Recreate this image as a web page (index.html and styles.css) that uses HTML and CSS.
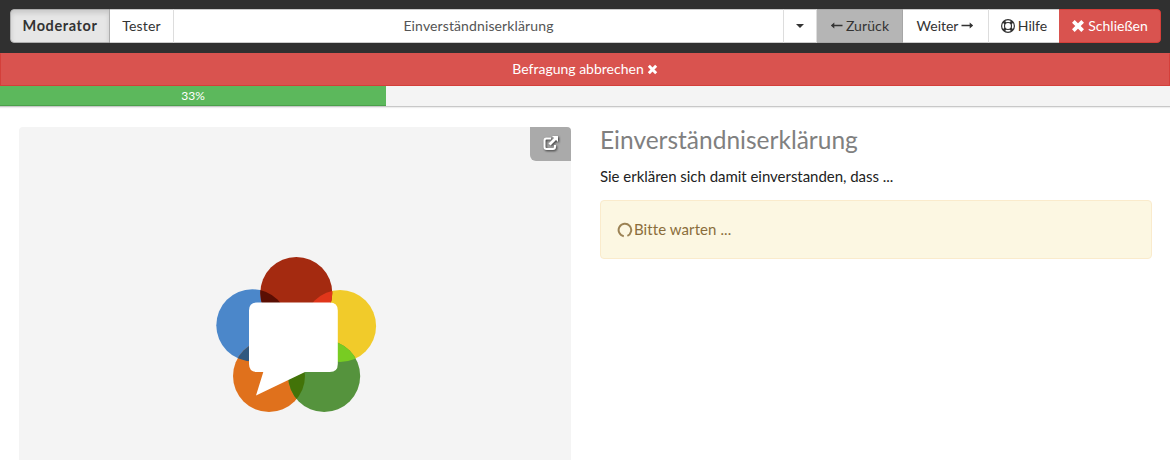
FILE: index.html
```html
<!DOCTYPE html>
<html lang="de">
<head>
<meta charset="utf-8">
<title>Einverständniserklärung</title>
<link rel="stylesheet" href="styles.css">
</head>
<body>
<header class="topbar">
  <div class="btn-group">
    <button class="btn btn-mod active">Moderator</button>
    <button class="btn btn-tester">Tester</button>
    <button class="btn btn-page">Einverständniserklärung</button>
    <button class="btn btn-caret" aria-label="Seiten"><span class="caret"></span></button>
    <button class="btn btn-back">
      <svg class="arrow" width="13" height="10" viewBox="0 0 13 10"><path d="M12.500 4.500H2"/><path class="tip" d="M.8 4.500 4.300 1.500v6z"/></svg>
      <span>Zurück</span>
    </button>
    <button class="btn btn-next">
      <span>Weiter</span>
      <svg class="arrow" width="13" height="10" viewBox="0 0 13 10"><path d="M.5 4.500H11"/><path class="tip" d="M12.200 4.500 8.700 1.500v6z"/></svg>
    </button>
    <button class="btn btn-help">
      <svg class="ring" width="14" height="14" viewBox="0 0 14 14"><circle cx="7" cy="7" r="6.400"/><circle cx="7" cy="7" r="3.500"/><path class="spokes" d="M2.600 2.600l2 2M11.400 2.600l-2 2M2.600 11.400l2-2M11.400 11.400l-2-2"/></svg>
      <span>Hilfe</span>
    </button>
    <button class="btn btn-close">
      <svg class="cross" width="14" height="14" viewBox="0 0 12 12"><path d="M2 2l8 8M10 2l-8 8"/></svg>
      <span>Schließen</span>
    </button>
  </div>
</header>
<div class="abort">
  <span>Befragung abbrechen</span>
  <svg class="cross" width="11" height="11" viewBox="0 0 12 12"><path d="M2 2l8 8M10 2l-8 8"/></svg>
</div>
<div class="progress"><div class="progress-bar" style="width:33%">33%</div></div>
<main class="content">
  <section class="video">
    <button class="popout" aria-label="Extern öffnen">
      <svg width="17" height="17" viewBox="0 0 17 17">
        <path class="box" d="M9 3.500H4.500Q2.500 3.500 2.500 5.500v6.500q0 2 2 2h6.500q2 0 2-2V10"/>
        <path class="head" d="M10 1h6v6l-2-2-5.500 5.500-2-2L12 3z"/>
      </svg>
    </button>
    <svg class="logo" width="162" height="158" viewBox="215 256 162 158">
      <defs>
        <clipPath id="blue"><circle cx="252.300" cy="325.200" r="36"/></clipPath>
        <clipPath id="yellow"><circle cx="340.100" cy="326" r="36"/></clipPath>
        <clipPath id="green"><circle cx="324.200" cy="376" r="36"/></clipPath>
      </defs>
      <circle cx="252.300" cy="325.200" r="36" fill="#4b87ca"/>
      <circle cx="340.100" cy="326" r="36" fill="#f1cb2a"/>
      <circle cx="269" cy="376" r="36" fill="#e0711c"/>
      <circle cx="324.200" cy="376" r="36" fill="#55933d"/>
      <circle cx="296.300" cy="293" r="36" fill="#a42a10"/>
      <circle cx="296.300" cy="293" r="36" fill="#5a0e03" clip-path="url(#blue)"/>
      <circle cx="296.300" cy="293" r="36" fill="#e0361a" clip-path="url(#yellow)"/>
      <circle cx="269" cy="376" r="36" fill="#30587f" clip-path="url(#blue)"/>
      <circle cx="269" cy="376" r="36" fill="#427308" clip-path="url(#green)"/>
      <circle cx="324.200" cy="376" r="36" fill="#78cc22" clip-path="url(#yellow)"/>
      <path fill="#fff" d="M257 302.500h72.800q8 0 8 8V364q0 8-8 8H305l-49 23.600 7.300-23.600H257q-8 0-8-8v-53.500q0-8 8-8z"/>
    </svg>
  </section>
  <section class="survey">
    <h1>Einverständniserklärung</h1>
    <p>Sie erklären sich damit einverstanden, dass ...</p>
    <div class="alert">
      <svg class="spinner" width="16" height="16" viewBox="0 0 16 16"><path d="M6.800 14.200A6.300 6.300 0 1 1 10.400 13.800"/></svg>
      <span class="wait">Bitte warten ...</span>
    </div>
  </section>
</main>
</body>
</html>
```
FILE: styles.css
```css
* { box-sizing: border-box; }
body {
  margin: 0;
  height: 460px;
  overflow: hidden;
  background: #fff;
  color: #333;
  font: 14px/20px Lato, sans-serif;
}
svg { display: block; flex: none; }
.topbar { height: 53px; padding: 9px 9px 0 10px; background: #303030; }
.btn-group { display: flex; height: 34px; border-radius: 4px; overflow: hidden; }
.btn {
  display: flex;
  align-items: center;
  justify-content: center;
  flex: none;
  gap: 3px;
  padding: 0;
  border: 1px solid #ccc;
  border-width: 1px 1px 1px 0;
  border-right-color: #ddd;
  background: #fff;
  color: #333;
  font: inherit;
  white-space: nowrap;
}
.btn-mod { width: 100px; border-left-width: 1px; border-radius: 4px 0 0 4px; font-weight: 700; font-size: 14.5px; letter-spacing: .6px; }
.btn-mod.active { background: #e6e6e6; border-color: #adadad; box-shadow: inset 0 3px 5px rgba(0,0,0,.125); }
.btn-tester { width: 64px; letter-spacing: .15px; }
.btn-page { flex: 1; color: #555; letter-spacing: .12px; }
.btn-caret { width: 33px; }
.caret { border: 4px solid transparent; border-top-color: #333; border-bottom: 0; }
.btn-back { width: 86px; background: #b5b5b5; border-color: #a6a6a6; letter-spacing: .1px; }
.btn-next { width: 86px; }
.btn-help { width: 70px; border-right: 0; }
.btn-close { width: 102px; background: #d9534f; border-color: #d43f3a; border-radius: 0 4px 4px 0; color: #fff; }
.arrow { fill: none; stroke: currentColor; stroke-width: 1.300; }
.tip { fill: currentColor; stroke: none; }
.ring { fill: none; stroke: #333; stroke-width: 1.200; }
.spokes { stroke-width: 2.800; }
.cross { fill: none; stroke: #fff; stroke-width: 3.200; }
.abort {
  display: flex;
  align-items: center;
  justify-content: center;
  gap: 3px;
  height: 33px;
  padding-bottom: 1px;
  border: 1px solid #d43f3a;
  border-top-color: #d9534f;
  background: #d9534f;
  color: #fff;
}
.progress { height: 21px; background: #f4f4f4; border-bottom: 1px solid #c8c8c8; box-shadow: 0 1px 1px #eee; }
.progress-bar { height: 20px; background: #5cb85c; box-shadow: inset 0 -1px 0 #4ba04b; color: #fff; font-size: 12px; text-align: center; }
.content { display: flex; gap: 29px; padding: 20px 18px 0 19px; }
.video { position: relative; flex: none; width: 552px; height: 333px; padding: 129px 0 0 196px; border-radius: 4px 4px 0 0; background: #f4f4f4; }
.popout {
  position: absolute;
  top: 0;
  right: 0;
  display: flex;
  align-items: center;
  justify-content: center;
  width: 41px;
  height: 34px;
  padding: 0 0 1px;
  border: 0;
  border-radius: 0 4px 0 6px;
  background: #aaa;
}
.popout svg { filter: drop-shadow(1px 1px 1px #333); }
.box { fill: none; stroke: #fff; stroke-width: 2; }
.head { fill: #fff; }
.survey { flex: 1; }
h1 { margin: 0; color: #808080; font-size: 24.5px; font-weight: 400; line-height: 26px; }
p { margin: 13px 0 14px; color: #222; font-size: 15px; letter-spacing: -.03px; }
.alert { display: flex; align-items: center; gap: 1px; height: 59px; padding: 0 16px; border: 1px solid #faebcc; border-radius: 4px; background: #fcf7e2; color: #8a6d3b; font-size: 15px; }
.wait { padding-bottom: 2px; letter-spacing: .08px; }
.spinner { fill: none; stroke: #9b8254; stroke-width: 2; }
```
